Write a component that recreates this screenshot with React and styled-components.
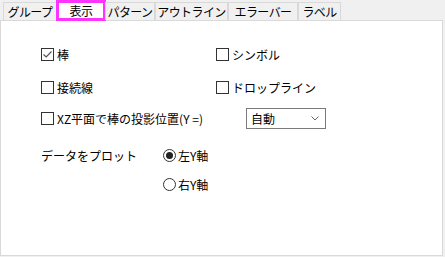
import React from "react";
import styled, { createGlobalStyle } from "styled-components";

const Global = createGlobalStyle`
  html, body { margin: 0; padding: 0; background: #f0f0f0; }
  body { font-family: "Noto Sans CJK JP", "Noto Sans", sans-serif; font-size: 12px; color: #000; }
`;

const Window = styled.div`
  width: 445px;
  height: 257px;
  background: #f0f0f0;
  display: flex;
  flex-direction: column;
  overflow: hidden;
`;

const TabBar = styled.div`
  display: flex;
  align-items: flex-end;
  height: 20px;
  padding-left: 3px;
  position: relative;
  z-index: 1;
`;

const Tab = styled.div`
  box-sizing: border-box;
  width: ${(p) => p.$w}px;
  height: ${(p) => (p.$active ? 21 : 18)}px;
  margin-bottom: ${(p) => (p.$active ? -1 : 0)}px;
  display: flex;
  align-items: center;
  justify-content: center;
  font-size: 12px;
  letter-spacing: -0.6px;
  white-space: nowrap;
  line-height: 1;
  background: ${(p) => (p.$active ? "#fff" : "#f0f0f0")};
  border: ${(p) => (p.$active ? "3px solid #ff33ff" : "1px solid #d9d9d9")};
  border-bottom: ${(p) => (p.$active ? "3px solid #ff33ff" : "none")};
  margin-left: ${(p) => (p.$active ? -1 : 0)}px;
  margin-right: ${(p) => (p.$active ? -1 : 0)}px;
  padding-top: ${(p) => (p.$active ? 0 : 1)}px;
  color: #000;
`;

const Panel = styled.div`
  box-sizing: border-box;
  width: 443px;
  height: 236px;
  background: #fff;
  border: 1px solid #d9d9d9;
  padding: 23px 0 0 40px;
  display: flex;
  flex-direction: column;
`;

const Row = styled.div`
  display: flex;
  align-items: center;
  height: 21px;
  margin-top: ${(p) => p.$mt || 0}px;
  padding-left: ${(p) => p.$indent || 0}px;
`;

const Item = styled.label`
  display: flex;
  align-items: center;
  gap: 3px;
  width: ${(p) => (p.$w ? `${p.$w}px` : "auto")};
  flex: none;
  white-space: nowrap;
  line-height: 1;
`;

const Box = styled.span`
  box-sizing: border-box;
  width: 13px;
  height: 13px;
  border: 1px solid #333;
  background: #fff;
  display: inline-flex;
  align-items: center;
  justify-content: center;
  flex: none;
`;

const Radio = styled.span`
  box-sizing: border-box;
  width: 13px;
  height: 13px;
  border: 1px solid #333;
  border-radius: 50%;
  background: #fff;
  display: inline-flex;
  align-items: center;
  justify-content: center;
  flex: none;
  margin-right: -1px;
  &::after {
    content: "";
    width: 7px;
    height: 7px;
    border-radius: 50%;
    background: ${(p) => (p.$on ? "#222" : "transparent")};
  }
`;

const Text = styled.span`
  width: ${(p) => (p.$w ? `${p.$w}px` : "auto")};
  flex: none;
  line-height: 1;
`;

const Select = styled.div`
  box-sizing: border-box;
  width: 80px;
  height: 21px;
  border: 1px solid #7a7a7a;
  background: #fff;
  display: flex;
  align-items: center;
  justify-content: space-between;
  padding: 0 6px 0 4px;
  line-height: 1;
`;

const Check = ({ on }) => (
  <Box>
    {on && (
      <svg width="11" height="11" viewBox="0 0 11 11">
        <polyline points="1.5,5.5 4.2,8 9.5,2.5" fill="none" stroke="#555" strokeWidth="1.2" />
      </svg>
    )}
  </Box>
);

const tabs = [
  ["グループ", 54],
  ["表示", 50],
  ["パターン", 50],
  ["アウトライン", 73],
  ["エラーバー", 70],
  ["ラベル", 43],
];

export default function App() {
  return (
    <>
      <Global />
      <Window>
        <TabBar>
          {tabs.map(([t, w], i) => (
            <Tab key={t} $w={w} $active={i === 1}>
              {t}
            </Tab>
          ))}
        </TabBar>
        <Panel>
          <Row>
            <Item $w={175}>
              <Check on />
              棒
            </Item>
            <Item>
              <Check />
              シンボル
            </Item>
          </Row>
          <Row $mt={12}>
            <Item $w={175}>
              <Check />
              接続線
            </Item>
            <Item>
              <Check />
              ドロップライン
            </Item>
          </Row>
          <Row $mt={10}>
            <Item $w={205}>
              <Check />
              XZ平面で棒の投影位置(Y =)
            </Item>
            <Select>
              <span>自動</span>
              <svg width="8" height="5" viewBox="0 0 8 5">
                <polyline points="0.5,0.5 4,4 7.5,0.5" fill="none" stroke="#666" strokeWidth="1" />
              </svg>
            </Select>
          </Row>
          <Row $mt={16}>
            <Text $w={122}>データをプロット</Text>
            <Item>
              <Radio $on />
              左Y軸
            </Item>
          </Row>
          <Row $mt={8} $indent={122}>
            <Item>
              <Radio />
              右Y軸
            </Item>
          </Row>
        </Panel>
      </Window>
    </>
  );
}
